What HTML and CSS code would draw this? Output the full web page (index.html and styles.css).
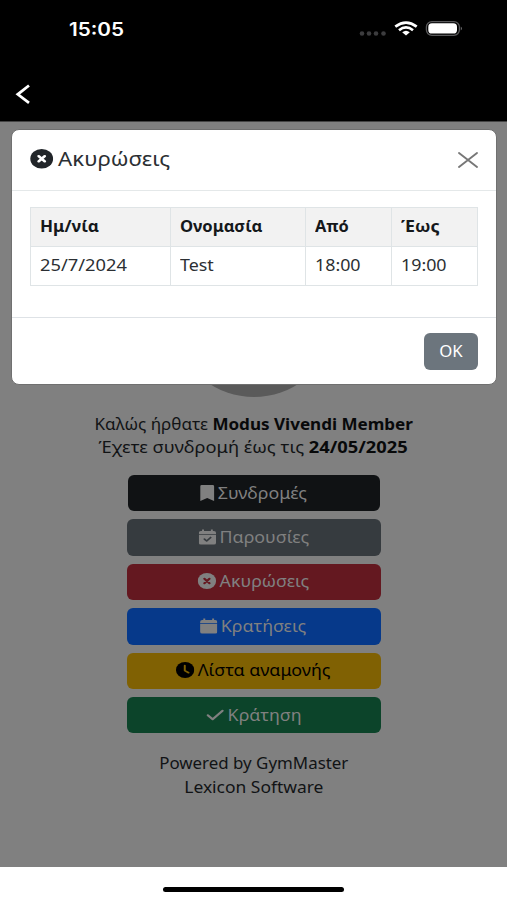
FILE: index.html
```html
<!DOCTYPE html>
<html lang="el">
<head>
<meta charset="utf-8">
<meta name="viewport" content="width=device-width, initial-scale=1">
<title>GymMaster</title>
<link rel="stylesheet" href="styles.css">
</head>
<body>
<header class="topbar">
  <div class="status">
    <span class="clock">15:05</span>
    <svg class="status-icons" width="104" height="20" viewBox="0 0 104 20" aria-hidden="true">
      <g fill="#3c3c3e"><circle cx="3" cy="13.500" r="2.300"/><circle cx="10" cy="13.500" r="2.300"/><circle cx="17" cy="13.500" r="2.300"/><circle cx="24.500" cy="13.500" r="2.300"/></g>
      <g fill="none" stroke="#fff" stroke-width="2.700"><path d="M36.300 6.600Q47 -1.400 57.700 6.600"/><path d="M40 10.200Q47 4.600 54 10.200"/></g>
      <path fill="#fff" d="M43.200 12.300Q47 9.300 50.800 12.300L47 15.500Z"/>
      <rect x="67.400" y="1.600" width="33" height="13.700" rx="5.500" fill="none" stroke="#59595b" stroke-width="1.300"/>
      <rect x="69.300" y="3.300" width="28.700" height="10.200" rx="3.600" fill="#fff"/>
      <path fill="#77777a" d="M101.800 6.500Q104 8.500 101.800 10.500Z"/>
    </svg>
  </div>
  <svg class="back" width="18" height="22" viewBox="0 0 18 22" aria-hidden="true"><path d="M15 2.500L3.800 11.300L15 19.800" fill="none" stroke="#fff" stroke-width="2.800"/></svg>
</header>

<main class="page">
  <div class="avatar"></div>
  <div class="welcome">
    <p><span class="wide w-name">Καλώς ήρθατε <b>Modus Vivendi Member</b></span></p>
    <p><span class="wide w-sub">Έχετε συνδρομή έως τις <b>24/05/2025</b></span></p>
  </div>
  <nav class="actions">
    <a class="btn dark"><span class="wide"><svg class="icon mark" viewBox="2 0 12 16"><path d="M2 16V1.200Q2 0 3.200 0h9.600Q14 0 14 1.200V16L8 13Z"/></svg>Συνδρομές</span></a>
    <a class="btn gray"><span class="wide"><svg class="icon cal" viewBox="0 0 16 16"><path d="M3 0h1.800v1.600h6.400V0H13v1.600h1Q16 1.600 16 3.600V4.700H0V3.600Q0 1.600 2 1.600h1ZM0 5.700h16V14Q16 16 14 16H2Q0 16 0 14Z"/><path class="tick" d="M5.200 10.300L7.300 12.300L11 8.500"/></svg>Παρουσίες</span></a>
    <a class="btn red"><span class="wide"><svg class="icon" viewBox="0 0 16 16"><circle cx="8" cy="8" r="8"/><path class="cross" d="M5.800 5.800L10.200 10.200M10.200 5.800L5.800 10.200"/></svg>Ακυρώσεις</span></a>
    <a class="btn blue"><span class="wide"><svg class="icon cal" viewBox="0 0 16 16"><path d="M3 0h1.800v1.600h6.400V0H13v1.600h1Q16 1.600 16 3.600V4.700H0V3.600Q0 1.600 2 1.600h1ZM0 5.700h16V14Q16 16 14 16H2Q0 16 0 14Z"/></svg>Κρατήσεις</span></a>
    <a class="btn yellow"><span class="wide"><svg class="icon" viewBox="0 0 16 16"><circle cx="8" cy="8" r="8"/><path class="hands" d="M7.700 3.500V8.600L11 10.700"/></svg>Λίστα αναμονής</span></a>
    <a class="btn green"><span class="wide"><svg class="icon" viewBox="0 0 16 16"><path d="M1.800 8.200L6 12.200L14.600 3.800" fill="none" stroke="currentColor" stroke-width="2" stroke-linecap="round" stroke-linejoin="round"/></svg>Κράτηση</span></a>
  </nav>
  <footer class="credits">
    <p><span class="wide c1">Powered by GymMaster</span></p>
    <p><span class="wide c2">Lexicon Software</span></p>
  </footer>
</main>

<div class="homebar"><span></span></div>

<section class="modal" role="dialog">
  <div class="modal-head">
    <h1 class="wide title"><svg class="icon" viewBox="0 0 16 16"><circle cx="8" cy="8" r="8"/><path class="cross" d="M5.900 5.900L10.100 10.100M10.100 5.900L5.900 10.100"/></svg>Ακυρώσεις</h1>
    <svg class="close" width="20" height="16" viewBox="0 0 20 16" aria-hidden="true"><path d="M1 1L19 15M19 1L1 15" stroke="#777" stroke-width="1.900" stroke-linecap="round"/></svg>
  </div>
  <div class="modal-body">
    <table>
      <colgroup><col class="col-date"><col class="col-name"><col class="col-from"><col class="col-to"></colgroup>
      <thead><tr><th><span class="wide h1">Ημ/νία</span></th><th><span class="wide h2">Ονομασία</span></th><th><span class="wide h3">Από</span></th><th><span class="wide">Έως</span></th></tr></thead>
      <tbody><tr><td><span class="wide d1">25/7/2024</span></td><td><span class="wide">Test</span></td><td><span class="wide">18:00</span></td><td><span class="wide">19:00</span></td></tr></tbody>
    </table>
  </div>
  <div class="modal-foot"><button class="ok"><span class="wide ok-label">OK</span></button></div>
</section>
</body>
</html>
```
FILE: styles.css
```css
* { box-sizing: border-box; }
body {
  margin: 0;
  height: 900px;
  display: flex;
  flex-direction: column;
  position: relative;
  overflow: hidden;
  background: #fff;
  color: #111315;
  font: 15.5px/23.3px "Noto Sans", sans-serif;
}
p, h1 { margin: 0; }
b { color: #08090a; }

/* Horizontally extended lettering */
.wide { display: inline-block; white-space: nowrap; transform: scaleX(1.15); }
.w-name { transform: scaleX(1.1); }
.w-sub { transform: scaleX(1.18); }
.c1 { transform: scaleX(1.09); }
.c2 { transform: scaleX(1.125); }

.icon { width: 16px; height: 16px; fill: currentColor; margin-right: 3px; vertical-align: -2px; }
.mark { width: 12.500px; }
.cal { width: 15px; }
.tick, .cross, .hands { fill: none; stroke-width: 1.700; stroke-linecap: round; stroke-linejoin: round; }
.tick { stroke: #363b3f; }
.cross { stroke: #641820; stroke-width: 2; }
.hands { stroke: #806103; }

.topbar { height: 122px; background: #000; border-bottom: 1px solid #444; flex: none; }
.status { height: 58px; padding: 0 44px 0 69px; display: flex; justify-content: space-between; align-items: center; }
.clock { color: #fff; font: 600 18px/24px Inter, sans-serif; transform: scaleX(1.15); transform-origin: left; margin-top: 1px; }
.status-icons { margin-top: 2px; }
.back { display: block; margin: 25px 0 0 14px; }

.page { height: 745px; flex: none; background: #808080; display: flex; flex-direction: column; align-items: center; }
.avatar { width: 140px; height: 116px; margin-top: 159px; border-radius: 50%; background: #5a5a5a; flex: none; }
.welcome { margin-top: 16px; text-align: center; }
.actions { width: 254px; margin-top: 15.500px; display: flex; flex-direction: column; gap: 8px; }
.btn { height: 36.400px; border-radius: 6px; display: flex; justify-content: center; align-items: center; color: #808080; }
.dark { background: #101214; margin: 0 1px; }
.gray { background: #363b3f; }
.red { background: #641820; }
.blue { background: #06398a; }
.yellow { background: #806103; color: #000; }
.green { background: #0c442a; }
.credits { margin-top: 19px; text-align: center; }

.homebar { height: 33px; display: flex; justify-content: center; padding-top: 20px; }
.homebar span { width: 181px; height: 5px; border-radius: 3px; background: #000; }

.modal {
  position: absolute;
  left: 11px;
  top: 129px;
  width: 486px;
  height: 256px;
  background: #fff;
  border: 1px solid #707070;
  border-radius: 8px;
  color: #2b2f33;
}
.modal-head { height: 61px; padding: 0 18px; display: flex; align-items: center; justify-content: space-between; border-bottom: 1px solid #e4e8e9; }
.title { font-size: 19px; font-weight: 400; line-height: 28px; transform: scaleX(1.17); transform-origin: left; margin-top: -2px; }
.title .icon { width: 20px; height: 19.500px; margin-right: 4px; color: #212529; vertical-align: -2.500px; }
.title .cross { stroke: #fff; }
.modal-body { height: 127px; padding: 15.500px 18px; border-bottom: 1px solid #dee2e6; }
table { width: 447px; border-collapse: collapse; table-layout: fixed; }
.col-date { width: 140px; }
.col-name { width: 135px; }
.col-from { width: 86px; }
.col-to { width: 86px; }
th, td { height: 39px; padding: 0 9px 1px; border: 1px solid #dfe4e6; text-align: left; line-height: 22px; }
th { background: #f2f2f2; font-weight: 700; color: #15181b; }
table .wide { transform-origin: left; }
.wide.h1 { transform: scaleX(1.1); }
.wide.h2 { transform: scaleX(1.07); }
.wide.h3 { transform: scaleX(1.06); }
.wide.d1 { transform: scaleX(1.18); }
.modal-foot { display: flex; justify-content: flex-end; padding: 15px 18px; }
.ok { width: 54px; height: 37px; padding: 0; border: 0; border-radius: 6px; background: #6c757d; color: #fff; font: inherit; }
.ok-label { transform: scaleX(1.08); }
```
